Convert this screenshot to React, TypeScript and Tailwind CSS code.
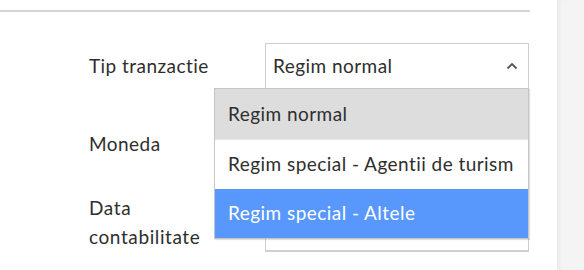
import React from "react";

function Chevron() {
  return (
    <svg width="12" height="8" viewBox="0 0 12 8" className="text-[#555]">
      <path d="M1.5 6.5 L6 2 L10.5 6.5" fill="none" stroke="currentColor" strokeWidth="1.8" />
    </svg>
  );
}

export default function App() {
  const font = { fontFamily: "Lato, 'Open Sans', sans-serif" };
  return (
    <div className="relative flex h-[270px] w-[584px] overflow-hidden bg-white text-[19px] tracking-[0.45px] text-[#2e2e2e]" style={font}>
      <div className="w-[557px] shrink-0">
        <div className="h-[10px]" />
        <div className="h-[2px] w-[530px] bg-[#d4d4d4]" />
        <div className="flex flex-col gap-[32px] pt-[31px] pl-[89px]">
          <div className="flex items-center">
            <div className="w-[176px] leading-[28px]">Tip tranzactie</div>
            <div className="relative">
              <div className="flex h-[46px] w-[264px] items-center justify-between border border-[#cfcfcf] bg-white pl-[7px] pr-[10px]">
                <span>Regim normal</span>
                <Chevron />
              </div>
              <div className="absolute top-[45px] left-[-51px] z-10 w-[315px] border border-[#c6c6c6] bg-white shadow-[1px_1px_1px_rgba(0,0,0,0.12)]">
                <div className="flex h-[50px] items-center bg-[#dddddd] pl-[13px]">Regim normal</div>
                <div className="flex h-[50px] items-center border-t border-[#e8e8e8] bg-white pl-[13px]">Regim special - Agentii de turism</div>
                <div className="flex h-[49px] items-center bg-[#5897fb] pl-[13px] text-white">Regim special - Altele</div>
              </div>
            </div>
          </div>
          <div className="flex items-center">
            <div className="w-[176px] leading-[28px]">Moneda</div>
            <div className="h-[46px] w-[264px] border border-[#cfcfcf] bg-white" />
          </div>
          <div className="flex items-center">
            <div className="w-[176px] -translate-y-[6px] leading-[29px] tracking-[0.6px]">
              Data
              <br />
              contabilitate
            </div>
            <div className="h-[47px] w-[264px] border border-[#cfcfcf] border-b-2 bg-white" />
          </div>
        </div>
      </div>
      <div className="flex-1 bg-[#f4f4f4] shadow-[inset_4px_0_4px_-2px_rgba(0,0,0,0.05)]" />
    </div>
  );
}
